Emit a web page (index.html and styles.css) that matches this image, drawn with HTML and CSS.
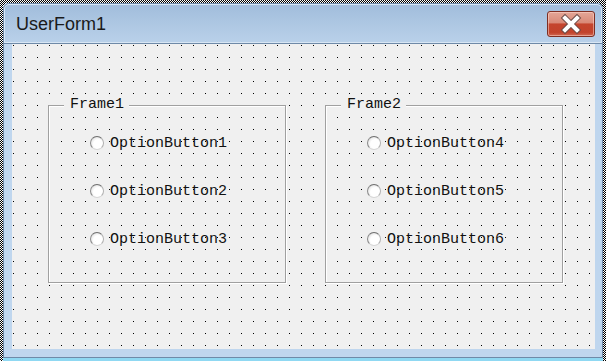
FILE: index.html
```html
<!DOCTYPE html>
<html lang="en">
<head>
  <meta charset="UTF-8">
  <title>UserForm1</title>
  <link rel="stylesheet" href="styles.css">
</head>
<body>

  <div class="selection">
    <div class="window">
      <div class="titlebar">
        <span class="title">UserForm1</span>
        <div class="close">
          <svg width="46" height="24" viewBox="0 0 46 24">
            <path d="M17 6 L29 18 M29 6 L17 18" stroke="#6b4a46" stroke-width="6" stroke-linecap="square" fill="none"/>
            <path d="M17 6 L29 18 M29 6 L17 18" stroke="#fff" stroke-width="4" stroke-linecap="square" fill="none"/>
          </svg>
        </div>
      </div>

      <div class="client">
        <div class="frame">
          <span class="caption">Frame1</span>
          <label class="option"><span class="radio"></span>OptionButton1</label>
          <label class="option"><span class="radio"></span>OptionButton2</label>
          <label class="option"><span class="radio"></span>OptionButton3</label>
        </div>
        <div class="frame">
          <span class="caption">Frame2</span>
          <label class="option"><span class="radio"></span>OptionButton4</label>
          <label class="option"><span class="radio"></span>OptionButton5</label>
          <label class="option"><span class="radio"></span>OptionButton6</label>
        </div>
      </div>
    </div>
  </div>

</body>
</html>
```

FILE: styles.css
```css
body {
  margin: 0;
  background: #fff;
  overflow: hidden;
}

.selection {
  width: 606px;
  box-sizing: border-box;
  padding: 3px 3px 0 3px;
  background: repeating-conic-gradient(#000 0 25%, #fff 0 50%) 0 0 / 2px 2px;
}

.window {
  display: flex;
  flex-direction: column;
  padding-bottom: 9px;
  background: #bfd6ee;
  border-bottom: 3px solid #8fd8f2;
  border-radius: 6px 6px 0 0;
  box-shadow: inset 0 0 0 1px #6f8aa8;
}

.titlebar {
  height: 41px;
  display: flex;
  align-items: center;
  justify-content: space-between;
  padding: 0 8px 0 13px;
  border-radius: 6px 6px 0 0;
  background: linear-gradient(#a0bcdb, #b0c9e4 60%, #bad1ea);
  box-shadow: inset 0 0 0 1px #6f8aa8, inset 0 0 0 2px #d8e6f4;
}

.title {
  font-family: "Liberation Sans", Arial, sans-serif;
  font-size: 18px;
  color: #1a1a1a;
  padding-top: 2px;
}

.close {
  width: 46px;
  height: 24px;
  margin-top: 1px;
  border: 1px solid #7d2e22;
  border-radius: 3px;
  background: linear-gradient(#e3a697, #d98a78 45%, #c4452e 50%, #c2432c 85%, #d06a55);
  box-shadow: inset 0 0 0 1px rgba(255, 220, 210, 0.5);
}

.close svg {
  display: block;
}

.client {
  margin: 0 8px 0 9px;
  height: 305px;
  display: flex;
  gap: 39px;
  padding: 61px 0 0 36px;
  box-sizing: border-box;
  background-color: #000;
  background-image:
    linear-gradient(90deg, #f0f0f0 11px, transparent 11px),
    linear-gradient(#f0f0f0 11px, transparent 11px);
  background-size: 12px 12px;
  background-position: -10px -10px;
}

.frame {
  position: relative;
  box-sizing: border-box;
  width: 238px;
  height: 178px;
  border: 1px solid #a0a0a0;
  box-shadow: 1px 1px 0 #fff, inset 1px 1px 0 #fff;
  display: flex;
  flex-direction: column;
  gap: 32px;
  padding: 29px 0 0 41px;
}

.caption {
  position: absolute;
  top: -9px;
  left: 15px;
  padding: 0 5px 0 6px;
  background: #f0f0f0;
  font-family: "Liberation Mono", "Courier New", monospace;
  font-size: 15px;
  line-height: 16px;
  color: #111;
}

.option {
  display: flex;
  align-items: center;
  height: 16px;
  gap: 6px;
  font-family: "Liberation Mono", "Courier New", monospace;
  font-size: 15px;
  color: #111;
}

.radio {
  width: 12px;
  height: 12px;
  border-radius: 50%;
  border: 1px solid;
  border-color: #6e6e6e #b0b0b0 #d6d6d6 #8a8a8a;
  background: radial-gradient(circle at 60% 60%, #fff 45%, #e2e2e2 80%);
}
```
